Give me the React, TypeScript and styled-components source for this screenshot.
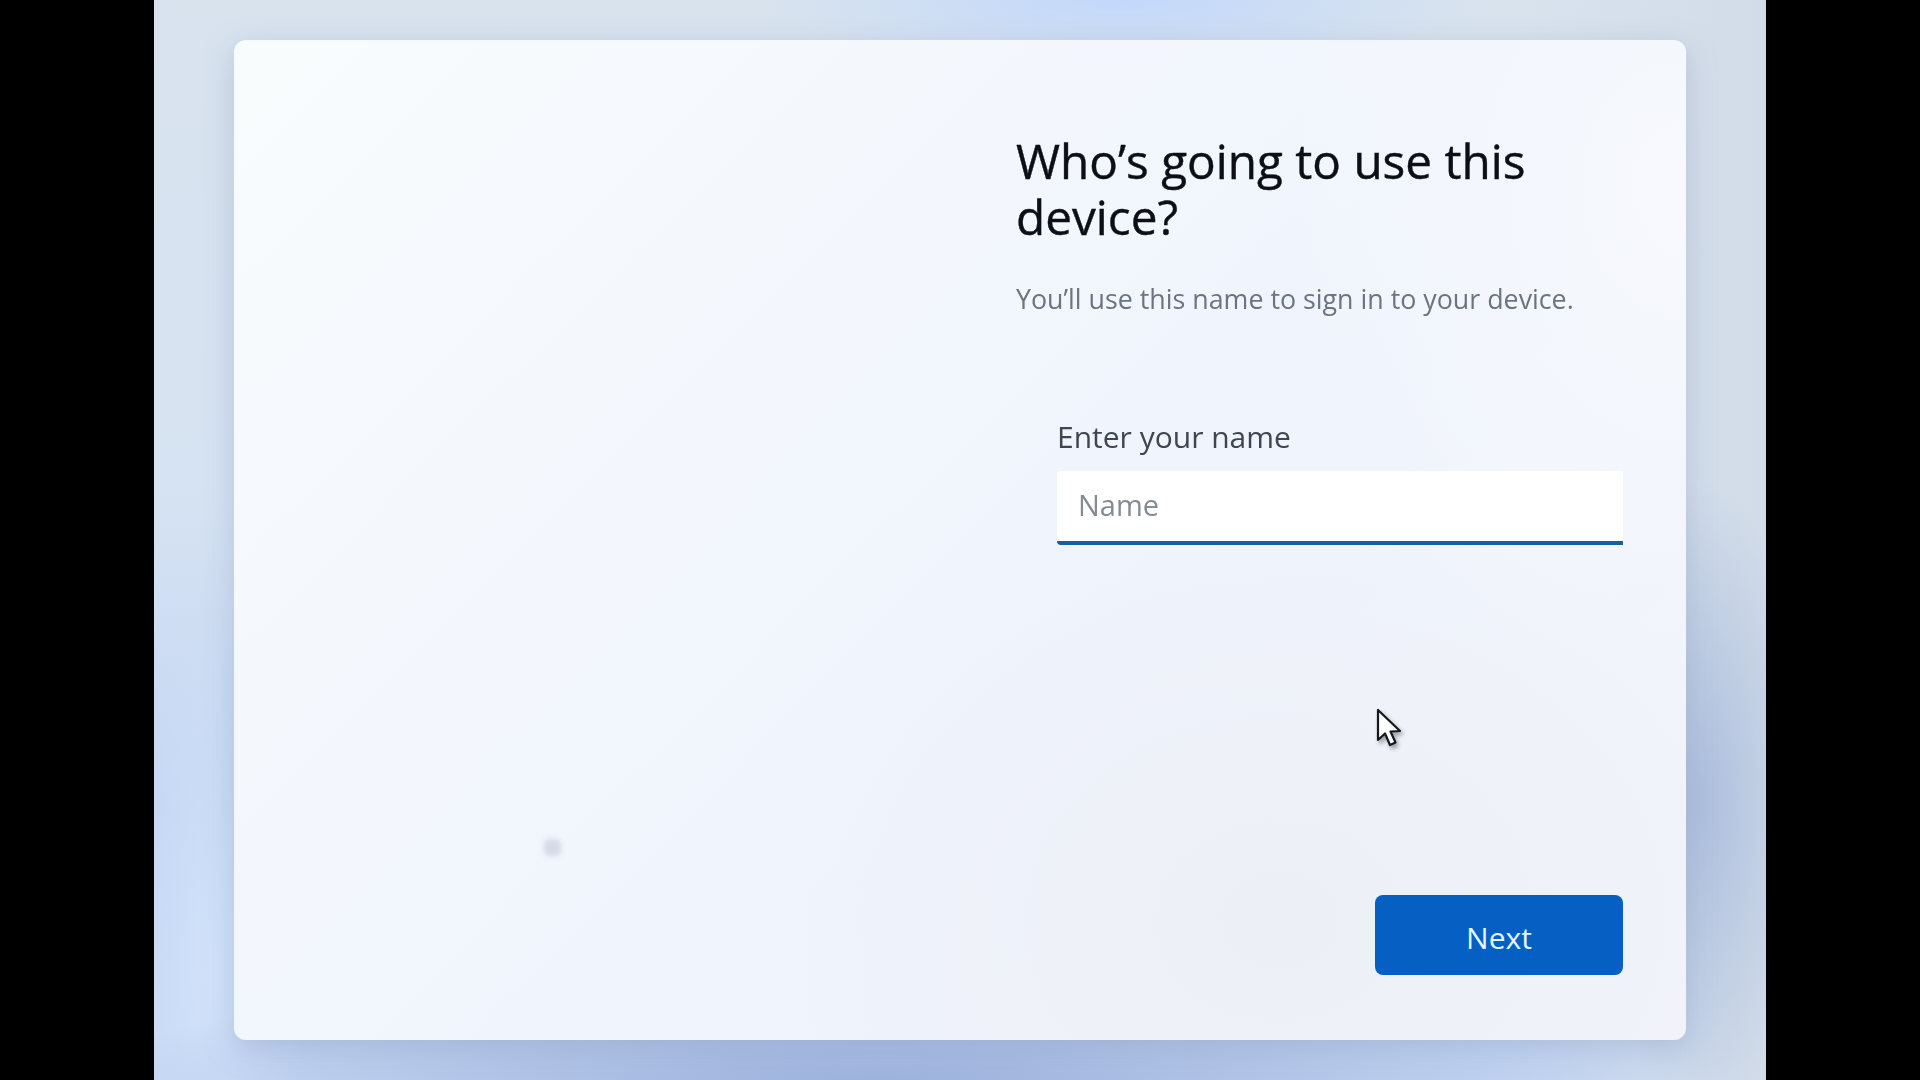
import React from "react";
import styled, { createGlobalStyle } from "styled-components";

const Global = createGlobalStyle`
  html, body { margin: 0; padding: 0; background: #000; height: 100%; overflow: hidden; }
  #root { height: 100%; }
`;

const Letterbox = styled.div`
  width: 1920px;
  height: 1080px;
  background: #000;
  display: flex;
  justify-content: center;
`;

const Stage = styled.main`
  position: relative;
  width: 1612px;
  height: 1080px;
  box-sizing: border-box;
  padding: 40px 80px;
  background:
    radial-gradient(ellipse 360px 70px at 60% 0%, #c2d8fb 0%, rgba(194, 216, 251, 0) 100%),
    radial-gradient(ellipse 800px 110px at 45% 100%, #9db2dc 0%, rgba(157, 178, 220, 0) 100%),
    radial-gradient(ellipse 110px 320px at 96% 74%, #aebfdd 0%, rgba(174, 191, 221, 0) 100%),
    radial-gradient(ellipse 90px 360px at 4% 90%, #d2e2fa 0%, rgba(210, 226, 250, 0) 100%),
    linear-gradient(90deg, transparent 0%, transparent 85%, #d2dce8 100%),
    linear-gradient(180deg, #d8e3ee 0%, #d6e3f2 45%, #c4d6f3 75%, #c9daf5 100%);
`;

const Card = styled.section`
  position: relative;
  width: 1452px;
  height: 1000px;
  box-sizing: border-box;
  border-radius: 12px;
  padding: 93px 63px 65px 782px;
  display: flex;
  flex-direction: column;
  font-family: "Open Sans", "Noto Sans", sans-serif;
  background:
    radial-gradient(ellipse 520px 420px at 72% 88%, #eceff6 0%, rgba(236, 239, 246, 0) 100%),
    radial-gradient(ellipse 400px 500px at 100% 15%, #f7f9fd 0%, rgba(247, 249, 253, 0) 100%),
    linear-gradient(135deg, #f9fcfd 0%, #f3f7fd 35%, #eff4fd 60%, #f2f4fa 100%);
  box-shadow: 0 8px 30px rgba(120, 140, 180, 0.34);
`;

const Heading = styled.h1`
  margin: 0;
  font-size: 47.7px;
  line-height: 56px;
  font-weight: 400;
  color: #0c0f14;
  filter: blur(0.4px);
  -webkit-text-stroke: 0.4px #0c0f14;
`;

const Subtitle = styled.p`
  margin: 36px 0 0;
  font-size: 26.8px;
  line-height: 36px;
  color: #6c7480;
  filter: blur(0.4px);
`;

const Field = styled.div`
  margin: 100px 0 0 41px;
  display: flex;
  flex-direction: column;
`;

const Label = styled.label`
  font-size: 30px;
  line-height: 40px;
  color: #3f4652;
  filter: blur(0.4px);
  margin-bottom: 14px;
`;

const Input = styled.div`
  height: 74px;
  box-sizing: border-box;
  padding: 0 21px 4px;
  display: flex;
  align-items: center;
  background: #fff;
  border-bottom: 4px solid #0f62a8;
  border-radius: 4px 0 0 4px;
  font-size: 29px;
  color: #858b93;
`;

const Placeholder = styled.span`
  filter: blur(0.4px);
`;

const Footer = styled.div`
  margin-top: auto;
  display: flex;
  justify-content: flex-end;
`;

const NextButton = styled.button`
  width: 248px;
  height: 80px;
  border: 0;
  border-radius: 8px;
  background: #0660c4;
  color: #e4f6ff;
  font: 500 30px "Open Sans", sans-serif;
  padding: 4px 0 0;
`;

const Pointer = styled.svg`
  position: absolute;
  left: 1142px;
  top: 668px;
  filter: drop-shadow(2px 3px 2px rgba(0, 0, 0, 0.35));
`;

const Smudge = styled.div`
  position: absolute;
  left: 310px;
  top: 799px;
  width: 17px;
  height: 17px;
  border-radius: 5px;
  background: #d5dae9;
  filter: blur(2.5px);
`;

export default function App() {
  return (
    <Letterbox>
      <Global />
      <Stage>
        <Card>
          <Heading>Who’s going to use this device?</Heading>
          <Subtitle>You’ll use this name to sign in to your device.</Subtitle>
          <Field>
            <Label>Enter your name</Label>
            <Input>
              <Placeholder>Name</Placeholder>
            </Input>
          </Field>
          <Footer>
            <NextButton>Next</NextButton>
          </Footer>
          <Smudge />
          <Pointer width="28" height="42" viewBox="0 0 28 42">
            <path
              d="M2 2 L2 32 L9 25.5 L14 37 L19.5 34.5 L14.5 23.5 L24 23 Z"
              fill="#fff"
              stroke="#15181d"
              strokeWidth="2.2"
              strokeLinejoin="round"
            />
          </Pointer>
        </Card>
      </Stage>
    </Letterbox>
  );
}
